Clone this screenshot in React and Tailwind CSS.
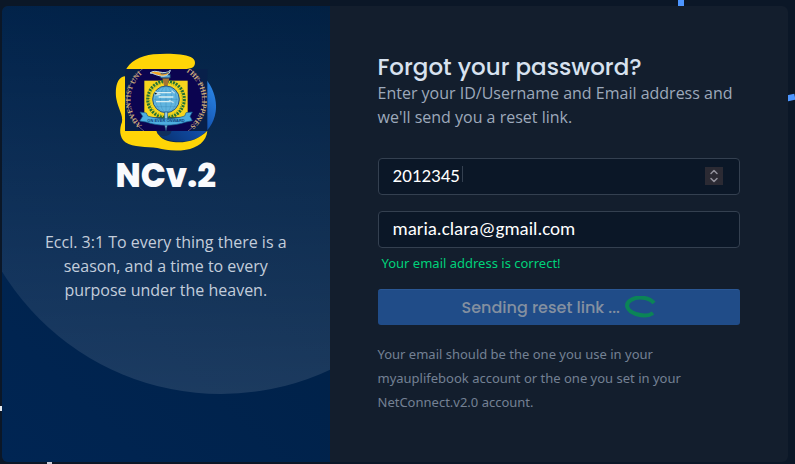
import { useState } from 'react';
import { ChevronUp, ChevronDown } from 'lucide-react';

const Seal = () => (
  <svg viewBox="45 39 306 300" className="h-[100px] w-[102px]" role="img" aria-label="University seal">
    <defs>
      <linearGradient id="swoosh" x1="0" y1="1" x2="1" y2="0">
        <stop offset="0" stopColor="#08306f" />
        <stop offset="0.5" stopColor="#1250ad" />
        <stop offset="1" stopColor="#2f8ff0" />
      </linearGradient>
      <clipPath id="sealClip">
        <rect x="75" y="87" width="247" height="186" />
      </clipPath>
      <path id="leftArc" d="M126 256 A102 102 0 0 1 148 88" />
      <path id="rightArc" d="M256 94 A100 100 0 0 1 258 266" />
    </defs>
    <path d="M318 118 C340 145 352 180 347 215 C342 250 322 278 292 294 C262 309 208 310 176 286 L176 268 L318 268 Z" fill="url(#swoosh)" />
    <path d="M75 95 C88 64 120 48 160 43 C200 39 250 41 272 51 C288 58 288 74 279 82 C268 90 240 86 215 88 L120 110 L100 270 L170 270 C174 292 194 304 220 306 C262 310 296 298 322 272 C320 304 292 324 258 329 C222 335 196 329 172 324 C140 319 100 324 76 307 C57 292 58 265 66 246 C70 224 54 206 49 176 C45 145 50 112 75 109 Z" fill="#ffd507" />
    <ellipse cx="192" cy="274" rx="22" ry="15" fill="#102f5e" />
    <rect x="75" y="87" width="247" height="186" fill="#08204a" />
    <g clipPath="url(#sealClip)">
      <circle cx="198" cy="178" r="119" fill="#0b0450" />
      <circle cx="198" cy="178" r="116" fill="none" stroke="#62647c" strokeWidth="3" />
      <rect x="133" y="122" width="130" height="110" fill="#f7d51d" />
      <circle cx="198" cy="178" r="55" fill="none" stroke="#247234" strokeWidth="9" strokeDasharray="6 3" />
      <circle cx="198" cy="178" r="49" fill="none" stroke="#5a9b3c" strokeWidth="3" strokeDasharray="3 4" />
      <path d="M187 114 H208 L202 142 H193 Z" fill="#a77330" />
      <path d="M181 104 H211 V114 H181 Z" fill="#57a7d4" stroke="#163260" strokeWidth="3" />
      <path d="M150 99 C168 84 190 109 211 91 C208 105 196 110 182 108 C168 106 162 100 150 99 Z" fill="#f4a323" stroke="#bad9e4" strokeWidth="3" />
      <path d="M182 101 C189 103 202 100 208 95" fill="none" stroke="#174e95" strokeWidth="3" />
      <circle cx="198" cy="178" r="40" fill="#60b4df" stroke="#285277" strokeWidth="3" />
      <g fill="none" stroke="#347fac" strokeWidth="1">
        <ellipse cx="198" cy="178" rx="17" ry="39" />
        <ellipse cx="198" cy="178" rx="31" ry="39" />
        <path d="M198 138 V218 M158 178 H238 M165 156 H231 M165 200 H231" />
      </g>
      <path d="M170 158 H214 M176 171 H220 M168 185 H212" stroke="#d8eef2" strokeWidth="4" />
      <path d="M165 155 L178 163 L166 165 M215 152 L224 160 M207 181 L221 188" stroke="#bce0ed" strokeWidth="4" />
      <path d="M194 216 H203 V251 L198 272 L193 251 Z" fill="#91cce7" stroke="#1b5077" strokeWidth="2" />
      <path d="M120 216 L139 219 L143 228 C178 239 220 239 254 228 L258 218 L277 216 L270 229 L277 242 L258 246 C220 259 176 259 138 246 L119 243 L128 229 Z" fill="#4eaee0" stroke="#155b8b" strokeWidth="2" />
      <text x="198" y="247" textAnchor="middle" fill="#0d427c" className="font-['Liberation_Sans'] text-[12px] font-bold">ON EVER ONWARD</text>
      <text fill="#c9ab78" className="font-['Liberation_Serif'] text-[22px] font-bold">
        <textPath href="#leftArc">ADVENTIST UNI</textPath>
      </text>
      <text fill="#c9ab78" className="font-['Liberation_Serif'] text-[22px] font-bold">
        <textPath href="#rightArc">THE PHILIPPINES</textPath>
      </text>
    </g>
  </svg>
);

const Spinner = () => (
  <svg viewBox="0 0 32 24" className="h-6 w-8" fill="none" aria-hidden="true">
    <path d="M30 7 C25 1 13 0 7 4 C0 8 3 15 12 18 C18 20 25 20 29 17" stroke="#0b8457" strokeWidth="4" />
  </svg>
);

const fieldClass =
  "block h-[37px] w-full rounded border border-[#344050] bg-[#0b1727] px-3.5 pb-0.5 font-[Carlito,'Open_Sans',sans-serif] text-[19px] text-white outline-none";

const App = () => {
  const [userId, setUserId] = useState('2012345');
  const [email, setEmail] = useState('maria.clara@gmail.com');

  const step = (amount) => setUserId(String(Number(userId) + amount));

  return (
    <main className="relative min-h-screen overflow-hidden bg-[#0b1727] pt-1.5 pr-[7px] pb-[3px] pl-0.5 font-['Open_Sans',sans-serif]">
      {/* Background line art that shows around the card */}
      <span className="absolute top-0 left-[678px] h-2 w-1.5 bg-[#4d96ff]"></span>
      <span className="absolute top-[95px] right-0 h-[6px] w-3 -rotate-12 bg-[#4d96ff]"></span>
      <span className="absolute top-[406px] left-0 h-[5px] w-1 bg-[#e6e8ec]"></span>
      <span className="absolute bottom-0 left-[47px] h-1 w-[5px] bg-[#c9ccd6]"></span>

      <div className="relative grid min-h-[455px] grid-cols-12 overflow-hidden rounded-md bg-[#131e2d]">
        <section className="relative col-span-5 overflow-hidden bg-linear-45 from-[#002553] to-[#001f42] px-9 pt-[47px] text-center">
          <div className="absolute -top-[126px] -left-[38px] size-[514px] rounded-full bg-linear-to-b from-white/0 from-20% to-white/11"></div>
          <div className="relative flex flex-col items-center">
            <Seal />
            <h1 className="mt-[3px] font-[Poppins,Inter,sans-serif] text-[33px] leading-10 font-extrabold text-[#f9fafd]">NCv.2</h1>
            <p className="mt-[34px] text-base leading-6 text-[#c3cddb]">
              Eccl. 3:1 To every thing there is a season, and a time to every purpose under the heaven.
            </p>
          </div>
        </section>

        <section className="col-span-7 p-12">
          <h2 className="font-[Poppins,Inter,sans-serif] text-[23px] leading-[27px] font-medium text-[#d8e2ef]">Forgot your password?</h2>
          <p className="text-base leading-6 text-[#9da9bb]">
            Enter your ID/Username and Email address and we'll send you a reset link.
          </p>

          <form className="mt-[29px]" onSubmit={(e) => e.preventDefault()}>
            <div className="relative">
              <input
                type="number"
                aria-label="ID/Username"
                value={userId}
                onChange={(e) => setUserId(e.target.value)}
                className={`${fieldClass} [appearance:textfield]`}
              />
              <span className="absolute top-2 left-[84px] h-4 w-px bg-[#344050]"></span>
              <div className="absolute top-[9px] right-[17px] flex h-[18px] w-[18px] flex-col items-center justify-center bg-[#2b2a33] text-[#92919b]">
                <button type="button" aria-label="Increase" onClick={() => step(1)} className="h-2">
                  <ChevronUp size={12} strokeWidth={3} className="-mt-0.5" />
                </button>
                <button type="button" aria-label="Decrease" onClick={() => step(-1)} className="h-2">
                  <ChevronDown size={12} strokeWidth={3} className="-mt-0.5" />
                </button>
              </div>
            </div>
            <input
              type="email"
              aria-label="Email address"
              value={email}
              onChange={(e) => setEmail(e.target.value)}
              className={`${fieldClass} mt-4`}
            />
            <p className="mt-[3px] ml-1 font-['Noto_Sans',sans-serif] text-[13px] leading-6 text-[#00d27a]">Your email address is correct!</p>
            <button
              type="submit"
              disabled
              className="mt-3.5 flex h-9 w-full items-center justify-center gap-1 rounded-[3px] border-t border-[#2a5794] bg-[#204c88] font-[Poppins,Inter,sans-serif] text-base font-medium text-[#8490a0]"
            >
              Sending reset link ...
              <Spinner />
            </button>
          </form>

          <p className="mt-[17px] max-w-[320px] font-['Noto_Sans',sans-serif] text-[13px] leading-6 text-[#748194]">
            Your email should be the one you use in your myauplifebook account or the one you set in your NetConnect.v2.0 account.
          </p>
        </section>
      </div>
    </main>
  );
};

export default App;
